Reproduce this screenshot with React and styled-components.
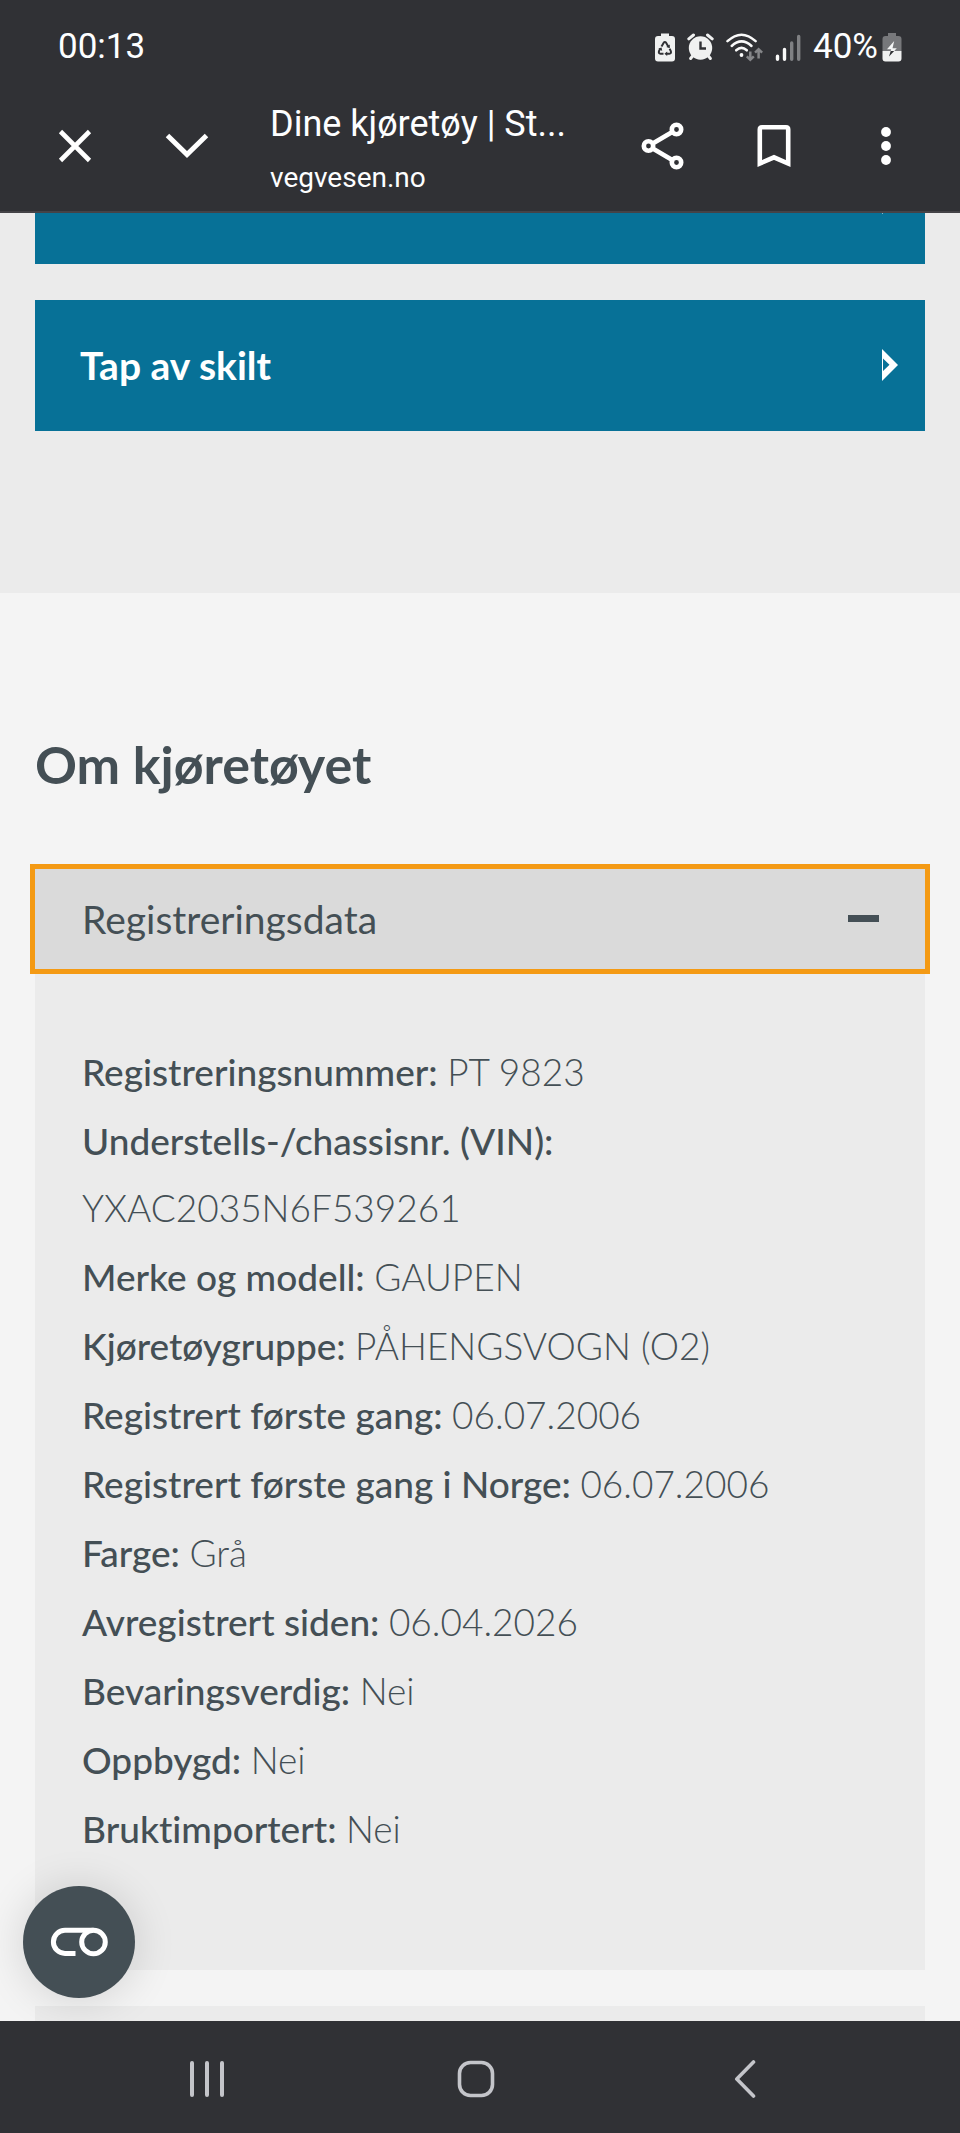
import React from "react";
import styled, { createGlobalStyle } from "styled-components";

const color = {
  chrome: "#303135",
  chromeLine: "#444347",
  white: "#fdfeff",
  navIcon: "#c4c5ca",
  blue: "#077197",
  section: "#ebebeb",
  page: "#f4f4f4",
  header: "#dadada",
  focus: "#f49a14",
  ink: "#444f55",
};

const GlobalStyle = createGlobalStyle`
  *, *::before, *::after { box-sizing: border-box; }
  body {
    margin: 0;
    background: ${color.page};
    color: ${color.ink};
    font-family: Lato, "Open Sans", sans-serif;
    font-variant-ligatures: none;
  }
  button { font: inherit; color: inherit; border: 0; padding: 0; background: none; cursor: pointer; }
  svg { display: block; flex: none; }
`;

const Screen = styled.div`
  display: flex;
  flex-direction: column;
  height: 100vh;
`;

const TopChrome = styled.header`
  background: ${color.chrome};
  color: ${color.white};
  border-bottom: 2px solid ${color.chromeLine};
  font-family: Roboto, sans-serif;
`;

const StatusBar = styled.div`
  display: flex;
  align-items: center;
  justify-content: space-between;
  height: 94px;
  padding: 0 58px;
  font-size: 35px;
  line-height: 44px;
`;

const StatusIcons = styled.div`
  display: flex;
  align-items: center;
  gap: 12px;
`;

const Battery = styled.span`
  display: flex;
  align-items: center;
  gap: 4px;
`;

const Toolbar = styled.div`
  display: flex;
  align-items: center;
  height: 117px;
  padding: 0 18px 13px 19px;
`;

const IconButton = styled.button`
  display: flex;
  align-items: center;
  justify-content: center;
  flex: none;
  width: 112px;
  height: 104px;
`;

const PageInfo = styled.div`
  flex: 1;
  min-width: 0;
  padding: 9px 0 0 27px;
  line-height: 54px;
  white-space: nowrap;
`;

const PageTitle = styled.div`
  font-size: 36px;
`;

const PageHost = styled.div`
  font-size: 28px;
`;

const Content = styled.main`
  position: relative;
  flex: 1;
  min-height: 0;
  overflow: hidden;
`;

const Actions = styled.section`
  display: flex;
  flex-direction: column;
  gap: 36px;
  margin-top: -80px;
  padding: 0 35px 162px;
  background: ${color.section};
`;

const ActionLink = styled.a`
  display: flex;
  align-items: center;
  justify-content: space-between;
  height: 131px;
  padding: 0 27px 2px 45px;
  background: ${color.blue};
  color: #fff;
  font-size: 39px;
  font-weight: 700;
  text-decoration: none;

  svg { margin-left: auto; }
`;

const About = styled.section`
  display: flex;
  flex-direction: column;
  padding: 135px 35px 0;
`;

const Heading = styled.h2`
  margin: 0 0 69px;
  font-size: 52px;
  line-height: 72px;
  font-weight: 700;
`;

const AccordionItem = styled.div`
  margin-bottom: 36px;
  background: ${color.section};
`;

const AccordionHeader = styled.button`
  display: flex;
  align-items: center;
  justify-content: space-between;
  width: 100%;
  height: 100px;
  padding: 0 46px 1px 47px;
  font-size: 39px;
  background: ${(p) => (p.$open ? color.header : color.section)};
  outline: ${(p) => (p.$open ? `5px solid ${color.focus}` : "none")};
`;

const Minus = styled.span`
  width: 31px;
  height: 7px;
  background: ${color.ink};
`;

const DataList = styled.ul`
  display: flex;
  flex-direction: column;
  gap: 2px;
  margin: 0;
  padding: 69px 47px 108px;
  list-style: none;
  font-size: 37px;
  line-height: 67px;
`;

const Label = styled.span`
  font-weight: 500;
`;

const Value = styled.span`
  display: ${(p) => (p.$ownLine ? "block" : "inline")};
  font-weight: 300;
`;

const FloatingButton = styled.button`
  position: absolute;
  left: 23px;
  bottom: 23px;
  display: flex;
  align-items: center;
  justify-content: center;
  width: 112px;
  height: 112px;
  border-radius: 50%;
  background: ${color.ink};
  box-shadow: 0 2px 44px rgba(0, 0, 0, 0.14);
`;

const SystemNav = styled.nav`
  display: grid;
  grid-template-columns: repeat(3, 1fr);
  flex: none;
  height: 112px;
  padding: 4px 80px 0 72px;
  background: ${color.chrome};
`;

const NavButton = styled.button`
  display: flex;
  align-items: center;
  justify-content: center;
`;

const rows = [
  ["Registreringsnummer:", "PT 9823"],
  ["Understells-/chassisnr. (VIN):", "YXAC2035N6F539261", true],
  ["Merke og modell:", "GAUPEN"],
  ["Kjøretøygruppe:", "PÅHENGSVOGN (O2)"],
  ["Registrert første gang:", "06.07.2006"],
  ["Registrert første gang i Norge:", "06.07.2006"],
  ["Farge:", "Grå"],
  ["Avregistrert siden:", "06.04.2026"],
  ["Bevaringsverdig:", "Nei"],
  ["Oppbygd:", "Nei"],
  ["Bruktimportert:", "Nei"],
];

const RecycleBatteryIcon = () => (
  <svg width="20" height="29" viewBox="0 0 20 29" aria-hidden="true">
    <path d="M6 0.5h8v2.5h3a3 3 0 0 1 3 3v19.500a3 3 0 0 1-3 3H3a3 3 0 0 1-3-3V6a3 3 0 0 1 3-3h3z" fill="#f0f1f1" />
    <g fill="none" stroke={color.chrome} strokeWidth="2">
      <path d="M6.500 13.500 8.700 9.700q1.200-1.500 2.400 0l2.200 3.800" />
      <path d="M14.600 15.700l1.200 2.400q.8 2.400-1.500 2.600h-3.300" />
      <path d="M5.200 15.700 4 18.100q-.7 2.400 1.500 2.600h3" />
    </g>
    <path d="M14.800 11.500v3.800l-3.500-1.400zM12.200 18.500v4.500l-2.800-2.300zM3.300 15.500l3.300-1 .6 3.400z" fill={color.chrome} />
  </svg>
);

const AlarmIcon = () => (
  <svg width="27" height="28" viewBox="0 0 27 28" aria-hidden="true">
    <g stroke="#f0f1f1" strokeLinecap="round" fill="none">
      <path d="M1.800 5.800 6.500 2M25.200 5.800 20.500 2" strokeWidth="3" />
      <path d="M6 22.500 3.600 25.500M21 22.500l2.400 3" strokeWidth="3" />
    </g>
    <circle cx="13.500" cy="15" r="11.700" fill="#f0f1f1" />
    <path d="M13.500 8.500v7h5.500" fill="none" stroke={color.chrome} strokeWidth="2.400" />
  </svg>
);

const WifiIcon = () => (
  <svg width="37" height="29" viewBox="0 0 37 29" aria-hidden="true">
    <g fill="none" stroke="#fafafa" strokeWidth="2.500" strokeLinecap="round">
      <path d="M1.500 8.200Q15.500-4.800 29.600 8.200" />
      <path d="M5.700 13Q15.500 3.800 25.500 13" />
      <path d="M10.200 17.300q5.300-4.800 10.600 0" />
    </g>
    <circle cx="15.500" cy="22" r="1.900" fill="#fafafa" />
    <g fill="none" stroke="#858689" strokeWidth="2.500">
      <path d="M24.300 18.500v8M20.800 23.300l3.500 3.500 3.500-3.500" />
      <path d="M32.600 25.500v-8M29.100 19.700l3.500-3.500 3.500 3.500" />
    </g>
  </svg>
);

const SignalIcon = () => (
  <svg width="26" height="29" viewBox="0 0 26 29" aria-hidden="true">
    <g strokeWidth="3.400" strokeLinecap="round">
      <path d="M2.500 23.300v3M9.500 16.500v9.800" stroke="#fafafa" />
      <path d="M16.700 10v16.300M23.700 3.500v22.800" stroke="#7f8083" />
    </g>
  </svg>
);

const ChargingIcon = () => (
  <svg width="20" height="30" viewBox="0 0 20 30" aria-hidden="true">
    <path d="M6 1h8v3h2.500a3 3 0 0 1 3 3v12H.5V7a3 3 0 0 1 3-3H6z" fill="#77787b" />
    <path d="M.5 19h19v7.500a3 3 0 0 1-3 3h-13a3 3 0 0 1-3-3z" fill="#f0f1f1" />
    <path d="M12.200 9 5 17.300h4.200L7 24.500l7.800-8.300h-4.300z" fill="#f5f6f6" />
    <path d="M8.700 19h3.500L7 24.500z" fill={color.chrome} />
  </svg>
);

const CloseIcon = () => (
  <svg width="34" height="34" viewBox="0 0 34 34" aria-hidden="true">
    <path d="M2.500 2.500l29 29M31.500 2.500l-29 29" stroke="#fff" strokeWidth="4.600" />
  </svg>
);

const ChevronDownIcon = () => (
  <svg width="44" height="28" viewBox="0 0 44 28" aria-hidden="true">
    <path d="M2.500 3.500 22 22.500l19.500-19" fill="none" stroke="#fff" strokeWidth="5" />
  </svg>
);

const ShareIcon = () => (
  <svg width="44" height="48" viewBox="0 0 44 48" aria-hidden="true">
    <path d="M8.500 24 36.500 7.500M8.500 24l28 16.500" stroke="#fff" strokeWidth="4.600" />
    <g fill={color.chrome} stroke="#fff" strokeWidth="4.600">
      <circle cx="8.500" cy="24" r="4.700" />
      <circle cx="36.500" cy="7.500" r="4.700" />
      <circle cx="36.500" cy="40.500" r="4.700" />
    </g>
  </svg>
);

const BookmarkIcon = () => (
  <svg width="34" height="44" viewBox="0 0 34 44" aria-hidden="true">
    <path d="M2.800 39.500V5.500q0-2.200 2.200-2.200h24q2.200 0 2.200 2.200v34L17 33.300z" fill="none" stroke="#fff" strokeWidth="4.600" />
  </svg>
);

const MoreIcon = () => (
  <svg width="10" height="38" viewBox="0 0 10 38" aria-hidden="true">
    <g fill="#fff">
      <circle cx="5" cy="5" r="4.900" />
      <circle cx="5" cy="19" r="4.900" />
      <circle cx="5" cy="33" r="4.900" />
    </g>
  </svg>
);

const ArrowIcon = () => (
  <svg width="16" height="32" viewBox="0 0 16 32" aria-hidden="true">
    <path fillRule="evenodd" d="M0 0 16 16 0 32zM1 9.500v12.500l6.500-6.200z" fill="#fff" />
  </svg>
);

const ConsentIcon = () => (
  <svg width="58" height="30" viewBox="0 0 58 30" aria-hidden="true">
    <g fill="none" stroke="#fff" strokeWidth="5">
      <path d="M25.500 26.500H15a11.500 11.500 0 0 1 0-23.200h28.500" />
      <circle cx="43.500" cy="15" r="11.800" />
    </g>
  </svg>
);

const RecentsIcon = () => (
  <svg width="36" height="38" viewBox="0 0 36 38" aria-hidden="true">
    <path d="M3 3v32M18 3v32M33 3v32" stroke={color.navIcon} strokeWidth="4" strokeLinecap="round" />
  </svg>
);

const HomeIcon = () => (
  <svg width="38" height="38" viewBox="0 0 38 38" aria-hidden="true">
    <rect x="2.500" y="2.500" width="33" height="33" rx="11" fill="none" stroke={color.navIcon} strokeWidth="3.600" />
  </svg>
);

const BackIcon = () => (
  <svg width="22" height="40" viewBox="0 0 22 40" aria-hidden="true">
    <path d="M19.500 3 2.800 20l16.700 17" fill="none" stroke={color.navIcon} strokeWidth="3.600" strokeLinecap="round" strokeLinejoin="round" />
  </svg>
);

export default function App() {
  return (
    <Screen>
      <GlobalStyle />
      <TopChrome>
        <StatusBar>
          <span>00:13</span>
          <StatusIcons>
            <RecycleBatteryIcon />
            <AlarmIcon />
            <WifiIcon />
            <SignalIcon />
            <Battery>
              <span>40%</span>
              <ChargingIcon />
            </Battery>
          </StatusIcons>
        </StatusBar>
        <Toolbar>
          <IconButton aria-label="Lukk"><CloseIcon /></IconButton>
          <IconButton aria-label="Minimer"><ChevronDownIcon /></IconButton>
          <PageInfo>
            <PageTitle>Dine kjøretøy | St...</PageTitle>
            <PageHost>vegvesen.no</PageHost>
          </PageInfo>
          <IconButton aria-label="Del"><ShareIcon /></IconButton>
          <IconButton aria-label="Bokmerke"><BookmarkIcon /></IconButton>
          <IconButton aria-label="Mer"><MoreIcon /></IconButton>
        </Toolbar>
      </TopChrome>

      <Content>
        <Actions>
          <ActionLink href="#"><ArrowIcon /></ActionLink>
          <ActionLink href="#tap-av-skilt">
            Tap av skilt
            <ArrowIcon />
          </ActionLink>
        </Actions>
        <About>
          <Heading>Om kjøretøyet</Heading>
          <AccordionItem>
            <AccordionHeader $open aria-expanded="true" aria-controls="registreringsdata">
              Registreringsdata
              <Minus />
            </AccordionHeader>
            <DataList id="registreringsdata">
              {rows.map(([label, value, ownLine]) => (
                <li key={label}>
                  <Label>{label}</Label> <Value $ownLine={ownLine}>{value}</Value>
                </li>
              ))}
            </DataList>
          </AccordionItem>
          <AccordionItem>
            <AccordionHeader aria-expanded="false" />
          </AccordionItem>
        </About>
        <FloatingButton aria-label="Samtykke"><ConsentIcon /></FloatingButton>
      </Content>

      <SystemNav>
        <NavButton aria-label="Siste apper"><RecentsIcon /></NavButton>
        <NavButton aria-label="Hjem"><HomeIcon /></NavButton>
        <NavButton aria-label="Tilbake"><BackIcon /></NavButton>
      </SystemNav>
    </Screen>
  );
}
